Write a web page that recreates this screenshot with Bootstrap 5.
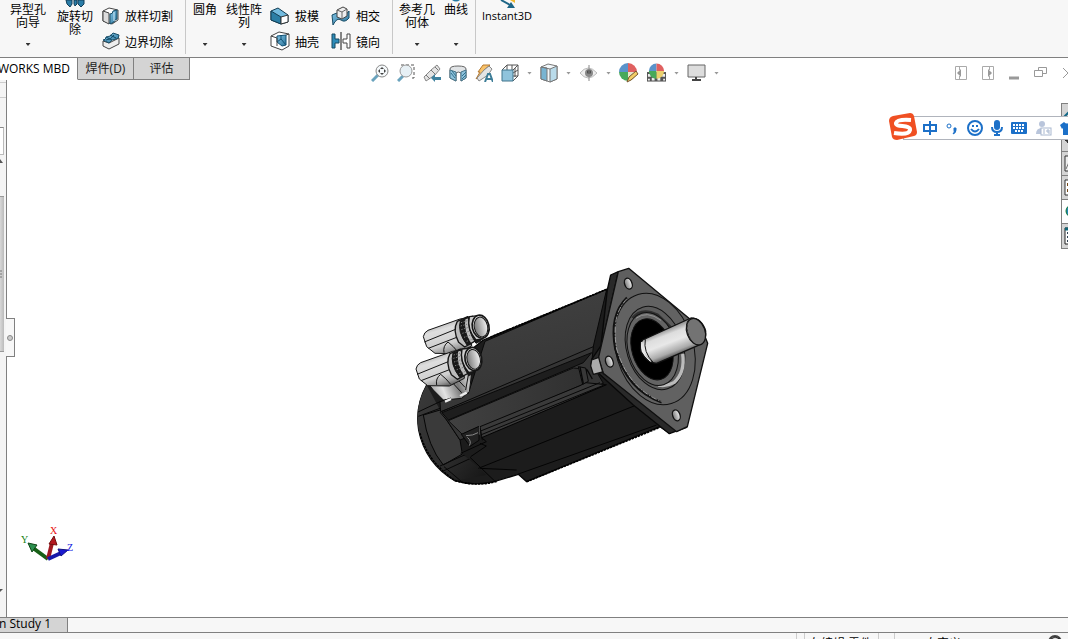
<!DOCTYPE html>
<html lang="zh-CN">
<head>
<meta charset="utf-8">
<meta name="viewport" content="width=device-width, initial-scale=1">
<title>零件建模</title>
<link href="https://cdn.jsdelivr.net/npm/bootstrap@5.3.0/dist/css/bootstrap.min.css" rel="stylesheet">
<script defer src="https://cdn.jsdelivr.net/npm/bootstrap@5.3.0/dist/js/bootstrap.bundle.min.js"></script>
<style>
body{font-family:"Open Sans","Noto Sans CJK SC",sans-serif;font-size:12px;line-height:13px;color:#000;background:#fff}
button{border:0;background:none;padding:0;color:inherit;font:inherit;line-height:inherit}
svg{display:block;flex:none}
.ribbon{height:58px;background:#f7f7f7;border-bottom:1px solid #808080;font-family:"Noto Sans CJK SC",sans-serif}
.ribbon-group{border-right:1px solid #c8c8c8;height:54px}
.tool-big{position:relative;display:flex;flex-direction:column;align-items:center;width:40px;height:54px;text-align:center;white-space:nowrap}
.tool-big .peek{position:absolute;top:0;left:50%;margin-left:-10px}
.tool-big .drop{margin-top:auto;margin-bottom:8px}
.up{padding-top:2px}
.down{padding-top:9px}
.slim{width:38px}
.wide-tool{width:56px}
.latin{font-family:"Open Sans",sans-serif;font-size:11px;width:62px;padding-top:9px}
.drop{width:5px;height:3px;background:#333;clip-path:polygon(0 0,100% 0,50% 100%)}
.tool-list{padding:3px 0 0 6px}
.tool-list button{height:26px;gap:5px;white-space:nowrap}
.cm-tab{height:22px;border:1px solid #808080;border-width:0 1px 1px 0;background:#d4d4d4;width:56px;white-space:nowrap;overflow:hidden;line-height:20px;color:#222}
.cm-tab.active{background:#fff;width:78px;border-bottom-color:#fff;direction:rtl;padding-right:7px;color:#000}
.view-tools{height:30px;margin-left:181px}
.view-tools .drop{background:#999}
.win-tools{height:30px;gap:14px;margin-right:-6px}
.strip{height:22px;z-index:2}
.tree-pane{width:7px;background:#f4f4f4;border-right:1px solid #808080;padding-top:2px}
.rule-line{height:15px;border-top:1px solid #ccc}
.filter-box{height:28px;border:1px solid #bbb;border-top-color:#888;border-left:0;width:4px;background:#fff}
.thumb{height:156px;width:4px;margin-top:33px;border:1px solid #999;border-width:1px 0;background:linear-gradient(90deg,#d8d8d8,#bbb)}
.pane-handle{position:absolute;left:6px;top:238px;width:9px;height:39px;background:#f7f7f7;border:1px solid #808080;border-left:0}
.pane-handle span{width:6px;height:6px;border:1px solid #888;background:#ccc;border-radius:50%}
.motor{position:absolute;left:calc(50% - 134px);top:170px}
.triad{position:absolute;left:20px;bottom:52px;font-family:"Liberation Serif",serif;font-size:10px}
.task-pane{position:absolute;right:0;top:23px;width:7px;border:1px solid #808080;border-right:0;background:#d4d4d4}
.task-pane button{height:24px;border-bottom:1px solid #808080;overflow:hidden}
.ime{position:absolute;right:0;top:36px;width:165px;height:24px;background:#fff;border:1px solid #b0b4bc;border-right:0;z-index:3;padding-left:19px;color:#1c70c8}
.ime .brand{position:absolute;left:-16px;top:-5px}
.sheet-tabs{height:16px;background:#f7f7f7;border-top:1px solid #808080;border-bottom:1px solid #808080}
.sheet-tab{width:68px;background:#d4d4d4;border-right:1px solid #808080;direction:rtl;overflow:hidden;white-space:nowrap;padding-right:16px;line-height:12px;font-size:12px}
.sheet-tab bdi{display:block;width:max-content;margin-top:-2px}
.status{height:6px;background:#f7f7f7;overflow:hidden}
.status div{border-left:1px solid #ccc;height:20px;white-space:nowrap}
.status .coord{position:absolute;right:5px}
.spacer-s{width:8px}.spacer-m{width:16px}.mode{width:74px;padding:4px 4px}.units{width:174px;padding:4px 30px}
</style>
</head>
<body class="d-flex flex-column vh-100 overflow-hidden">
<svg width="0" height="0" class="position-absolute">
 <defs>
  <linearGradient id="blue" x2="1" y2="1"><stop stop-color="#82c4e6"/><stop offset="1" stop-color="#2a7399"/></linearGradient>
  <linearGradient id="pale"><stop stop-color="#fff"/><stop offset="1" stop-color="#c4c8cc"/></linearGradient>
 </defs>
</svg>

<header class="ribbon d-flex flex-shrink-0 overflow-hidden">
 <div class="ribbon-group d-flex">
  <button class="tool-big up wide-tool"><span>异型孔<br>向导</span><span class="drop"></span></button>
  <button class="tool-big down slim"><svg class="peek" width="20" height="8"><path d="M1 0h6v4L5 7 2 4zM9 0h3v4l-2 2-1-2zM13 0h6v4l-3 3-3-3z" fill="#2a7da8" stroke="#123f58"/></svg><span>旋转切<br>除</span></button>
  <div class="tool-list d-flex flex-column ps-2 pe-2 me-1">
   <button class="d-flex align-items-center"><svg width="18" height="18" viewBox="0 0 18 18" stroke="#444"><path d="M1 4l6-3 9 2v10l-6 4-9-3z" fill="#fff"/><path d="M7 6v11l-6-3V4z" fill="#ddd"/><path d="M8 7q3 0 3-3l4-1v9q-3 1-3 3l-4 2z" fill="url(#blue)" stroke="#174c66"/><path d="M12 5v9" stroke="#d6f1ff"/></svg>放样切割</button>
   <button class="d-flex align-items-center"><svg width="18" height="18" viewBox="0 0 18 18" stroke="#444"><path d="M1 9l6 2L17 6v6L7 17l-6-3z" fill="#eee"/><path d="M1 8q3 0 3-3 5 0 7-4l6 2q0 4-3 4-4 0-7 4z" fill="url(#blue)" stroke="#174c66"/><path d="M4 5l6 3M8 3l6 3M4 8q5 0 8-5" stroke="#0e4763" fill="none"/></svg>边界切除</button>
  </div>
 </div>
 <div class="ribbon-group d-flex">
  <button class="tool-big up slim"><span>圆角</span><span class="drop"></span></button>
  <button class="tool-big up"><span>线性阵<br>列</span><span class="drop"></span></button>
  <div class="tool-list d-flex flex-column">
   <button class="d-flex align-items-center"><svg width="20" height="18" viewBox="0 0 20 18" stroke="#133d53"><path d="M1 4l7-3 10 7v7l-7 2-10-4z" fill="#72bade"/><path d="M1 4l10 6v7L1 13z" fill="#2b7ea5"/><path d="M11 10l7-2v7l-7 2z" fill="#fff" stroke="#333"/></svg>拔模</button>
   <button class="d-flex align-items-center"><svg width="20" height="20" viewBox="0 0 20 20" stroke="#444"><path d="M1 5l8-4 10 2v12l-7 4-11-4z" fill="#fff"/><path d="M7 5l9-1v10l-4 1-5-4z" fill="url(#blue)" stroke="#115073"/><path d="M7 11l4-3 5 6M11 4v4" fill="none" stroke="#115073"/><path d="M1 5l6 2v8M16 4l3-1" fill="none"/></svg>抽壳</button>
  </div>
  <div class="tool-list d-flex flex-column ps-2 ms-1 pe-2 me-1">
   <button class="d-flex align-items-center"><svg width="20" height="20" viewBox="0 0 20 20" stroke="#174c66"><path d="M1 9q4-3 9-1t8-3v7q-4 5-8 2t-8 5z" fill="url(#blue)"/><path d="M6 4l6-3 4 2v7l-5 3-5-2z" fill="#eee" stroke="#444"/><path d="M6 4l5 2 5-3M11 6v7" fill="none" stroke="#666"/></svg>相交</button>
   <button class="d-flex align-items-center"><svg width="20" height="18" viewBox="0 0 20 18"><path d="M1 2h3v5h4v4H4v5H1z" fill="#2d8bb8" stroke="#174861"/><path d="M19 2h-3v5h-4v4h4v5h3z" fill="#fff" stroke="#444"/><path d="M10 0v18" stroke="#111"/></svg>镜向</button>
  </div>
 </div>
 <div class="ribbon-group d-flex ps-1">
  <button class="tool-big up"><span>参考几<br>何体</span><span class="drop"></span></button>
  <button class="tool-big up slim"><svg class="peek" width="20" height="2"><path d="M6 0h8q-4 3-8 0" fill="#2679a1"/></svg><span>曲线</span><span class="drop"></span></button>
 </div>
 <button class="tool-big latin"><svg class="peek" width="20" height="9"><path d="M13 0h5v3z" fill="#f0b82d"/><path d="M4 0l9 5" stroke="#1d6586" stroke-width="2"/><path d="M18 8h-8l4-6z" fill="#1d6586"/></svg><span>Instant3D</span></button>
</header>

<div class="strip d-flex flex-shrink-0 position-relative">
 <button class="cm-tab active">SOLIDWORKS MBD</button>
 <button class="cm-tab">焊件(D)</button>
 <button class="cm-tab">评估</button>
 <div class="view-tools d-flex align-items-center gap-2">
  <button aria-label="整屏显示"><svg width="18" height="18" viewBox="0 0 18 18"><path d="M1 17l6-6" stroke="#6aa3bd" stroke-width="3"/><circle cx="11" cy="7" r="6" fill="#f5f9fb" stroke="#888"/><path d="M11 3l2 2H9zM11 11l2-2H9zM7 7l2-2v4zM15 7l-2-2v4z" fill="#444"/></svg></button>
  <button aria-label="局部放大"><svg width="18" height="18" viewBox="0 0 18 18"><path d="M4 1h13v13h-3" fill="none" stroke="#555" stroke-dasharray="3 2"/><path d="M1 17l5-5" stroke="#6aa3bd" stroke-width="3"/><circle cx="9" cy="7" r="6" fill="#e7f0f5" stroke="#999"/></svg></button>
  <button aria-label="上一视图"><svg width="18" height="18" viewBox="0 0 18 18"><path d="M1 13l7-7 6-5 3 4-5 6-9 6z" fill="#e4e4e4" stroke="#888"/><path d="M3 11l4 4M8 6l4 4M12 3l3 3" stroke="#777"/><path d="M8 14l4-4v3h6v3h-6v2z" fill="#3f829f"/></svg></button>
  <button aria-label="剖面视图"><svg width="18" height="18" viewBox="0 0 18 18"><path d="M1 5q0-3 8-3t8 3v9l-5 3V9q-3-2-5 0v8l-6-3z" fill="#e1e4e6" stroke="#666"/><path d="M1 6l6 2v9l-6-3zM12 8l5-2v8l-5 3z" fill="#8dc2dc" stroke="#47758a"/><path d="M2 9l4 5M3 7l4 5M13 12l4-4M13 15l4-4" stroke="#32718d"/></svg></button>
  <button aria-label="动态注解"><svg width="18" height="18" viewBox="0 0 18 18"><path d="M3 8L8 1h7L9 6l3 0L1 15l4-7z" fill="#f8c269" stroke="#b57930"/><path d="M2 14l7-8 5-4 3 3-4 6-9 6z" fill="#e4e4e4" stroke="#888"/><path d="M10 18l3-8h2l3 8M11 15h6" fill="none" stroke="#3d7d98" stroke-width="2"/></svg></button>
  <button aria-label="视图定向"><svg width="18" height="18" viewBox="0 0 18 18"><path d="M1 6l5-5h11v11l-5 5M6 1v5M12 6l5-5M12 12h5M11 1v5M12 9l5-3M14 4v9" fill="none" stroke="#555"/><path d="M1 6h11v11H1z" fill="#8fc3dc" stroke="#40748c"/></svg></button>
  <span class="drop"></span>
  <button aria-label="显示样式"><svg width="18" height="20" viewBox="0 0 18 20" stroke="#777"><path d="M1 4l7-3 9 2v13l-7 3-9-3z" fill="#f2f8fb"/><path d="M1 4l6 1v13l-6-2z" fill="#78b4d2"/><path d="M10 6l7-3v13l-7 3z" fill="#b9dbea"/><path d="M1 4l9 2" fill="none"/></svg></button>
  <span class="drop"></span>
  <button aria-label="隐藏项目"><svg width="19" height="16" viewBox="0 0 19 16"><path d="M1 8q8-10 17 0-9 10-17 0z" fill="#eee" stroke="#bbb"/><circle cx="10" cy="8" r="4" fill="#888"/><circle cx="10" cy="7" r="2" fill="#444"/><path d="M10 0v16" stroke="#888"/></svg></button>
  <span class="drop"></span>
  <button aria-label="编辑外观"><svg width="20" height="20" viewBox="0 0 20 20"><path d="M9 9V0a9 9 0 0 0-9 9z" fill="#5a93cb"/><path d="M9 9h9a9 9 0 0 0-9-9z" fill="#e06060"/><path d="M9 9H0a9 9 0 0 0 9 9z" fill="#48a95a"/><path d="M9 9v9q7 0 9-9z" fill="#e8e6ca"/><path d="M8 19l2-5 7-6 2 3-7 6z" fill="#f3ce67" stroke="#765630"/></svg></button>
  <button aria-label="应用布景"><svg width="19" height="20" viewBox="0 0 20 20"><path d="M0 9h20v10H0z" fill="#555"/><path d="M1 11h3v3H1zM5 15h3v3H5zM11 15h3v3h-3zM16 11h3v3h-3zM1 16h2v2H1zM17 16h2v2h-2z" fill="#eee"/><path d="M10 8V0a8 8 0 0 0-8 8z" fill="#5a93cb"/><path d="M10 8h8a8 8 0 0 0-8-8z" fill="#e06060"/><path d="M10 8H2a8 8 0 0 0 8 8z" fill="#48a95a"/><path d="M10 8v8a8 8 0 0 0 8-8z" fill="#ecd16d"/></svg></button>
  <span class="drop"></span>
  <button aria-label="视图设定"><svg width="19" height="18" viewBox="0 0 19 18"><path d="M1 1h17v12H1z" fill="#ddd" stroke="#666"/><path d="M9 13v3M5 16h9" stroke="#444" stroke-width="2"/></svg></button>
  <span class="drop"></span>
 </div>
 <div class="win-tools d-flex align-items-center ms-auto">
  <svg width="13" height="14"><path d="M.5.5h11v13H.5zM4.500 1v3M4.500 10v3" fill="none" stroke="#aaa"/><path d="M2 7l4-4v8z" fill="#999"/></svg>
  <svg width="13" height="14"><path d="M.5.5h11v13H.5zM7.500 1v3M7.500 10v3" fill="none" stroke="#aaa"/><path d="M10 7L6 3v8z" fill="#999"/></svg>
  <svg width="11" height="14"><path d="M0 12h10" stroke="#999" stroke-width="3"/></svg>
  <svg width="14" height="14"><path d="M4.500 5V1.500h8v6H9M.5 4.500h8v6h-8z" fill="none" stroke="#999"/></svg>
  <svg width="12" height="12"><path d="M1 1l10 10M11 1L1 11" stroke="#999"/></svg>
 </div>
</div>

<main class="d-flex flex-fill position-relative">
 <aside class="tree-pane d-flex flex-column">
  <div class="rule-line"></div><div class="rule-line"></div><div class="rule-line border-0"></div>
  <div class="filter-box"></div>
  <div class="mt-1"><svg width="5" height="4"><path d="M0 4V0l3 4z" fill="#555"/></svg></div>
  <div class="thumb d-flex align-items-center"><svg width="2" height="8"><path d="M0 1h2M0 4h2M0 7h2" stroke="#777"/></svg></div>
  <div class="mt-auto mb-4"><svg width="4" height="4"><path d="M0 0h3L0 3z" fill="#555"/></svg></div>
 </aside>
 <button class="pane-handle d-flex align-items-center justify-content-center" aria-label="展开"><span></span></button>

 <svg class="motor" width="320" height="250" viewBox="0 0 960 750" stroke-linejoin="round">
  <defs>
   <linearGradient id="top" x1=".3" y1="0" x2=".6" y2="1"><stop stop-color="#414141"/><stop offset="1" stop-color="#343434"/></linearGradient>
   <linearGradient id="shaft" x1="785" y1="235" x2="820" y2="325" gradientUnits="userSpaceOnUse"><stop stop-color="#777"/><stop offset=".25" stop-color="#ddd"/><stop offset=".5" stop-color="#e8e8e8"/><stop offset=".8" stop-color="#aaa"/><stop offset="1" stop-color="#383838"/></linearGradient>
   <linearGradient id="plug" x1="125" y1="218" x2="155" y2="316" gradientUnits="userSpaceOnUse"><stop stop-color="#b5b5b5"/><stop offset=".2" stop-color="#dedede"/><stop offset=".65" stop-color="#cfcfcf"/><stop offset=".85" stop-color="#999"/><stop offset="1" stop-color="#555"/></linearGradient>
   <linearGradient id="neck" x1="95" y1="420" x2="215" y2="370" gradientUnits="userSpaceOnUse"><stop stop-color="#aaa"/><stop offset=".25" stop-color="#e4e4e4"/><stop offset=".6" stop-color="#777"/><stop offset=".85" stop-color="#c8c8c8"/><stop offset="1" stop-color="#888"/></linearGradient>
   <linearGradient id="bore"><stop stop-color="#777"/><stop offset="1" stop-color="#f2f2f2"/></linearGradient>
   <linearGradient id="cap" x2="1" y2="1"><stop stop-color="#3a3a3a"/><stop offset=".6" stop-color="#2c2c2c"/><stop offset="1" stop-color="#151515"/></linearGradient>
   <linearGradient id="slot"><stop stop-color="#414141"/><stop offset="1" stop-color="#303030"/></linearGradient>
  </defs>
  <path d="M620 118L250 270 80 405C55 450 48 490 56 540 70 610 110 660 165 692Q220 710 285 694L355 673 380 695 780 530 810 550 720 440z" fill="#1c1c1c" stroke="#050505" stroke-width="4"/>
  <path d="M80 405C55 450 48 490 56 540 70 610 110 660 165 692L260 675 185 610 120 480z" fill="url(#cap)"/>
  <path d="M620 118L255 274 205 430 120 455 122 485 575 310z" fill="url(#top)" stroke="#080808" stroke-width="3"/>
  <path d="M70 495Q84 590 130 645L187 612 180 570 140 510 120 480z" fill="#3a3a3a" stroke="#050505" stroke-width="3"/>
  <path d="M54 486L120 455M55 499L120 475M120 648L200 612M132 662L212 625M132 650L185 695" stroke="#070707" stroke-width="3"/>
  <path d="M120 487L580 290 575 340 610 400 180 570 140 510z" fill="#353535" stroke="#080808" stroke-width="3"/>
  <path d="M126 488L575 308 550 338 145 510z" fill="#1e1e1e" stroke="#090909" stroke-width="3"/>
  <path d="M145 512L520 354 560 358 557 400 190 556z" fill="url(#slot)" stroke="#0c0c0c" stroke-width="3"/>
  <path d="M240 530L540 407 557 398 618 404 247 570z" fill="#3a3a3a" stroke="#080808" stroke-width="3"/>
  <path d="M242 543L600 398M244 554L610 406" stroke="#080808" stroke-width="3"/>
  <path d="M535 350l22 4 8 40-17 9z" fill="#383838" stroke="#080808" stroke-width="3"/>
  <path d="M540 351l10 50M561 359l16 28M573 340l20 28" fill="none" stroke="#080808" stroke-width="4"/>
  <path d="M184 553l53-24v42l-27 18z" fill="#222" stroke="#050505" stroke-width="3"/>
  <path d="M198 557Q220 557 234 548M202 562Q216 573 208 587" stroke="#888" fill="none" stroke-width="3"/>
  <path d="M238 529v25" stroke="#777" stroke-width="2"/>
  <path d="M182 605l77-32-14-10L622 402 722 460 240 653z" fill="#1c1c1c"/>
  <path d="M182 610l77-35-14-12L620 404M212 620L259 588 240 580M235 655L722 460M355 672L770 525M210 622L285 694M240 655L350 660" stroke="#040404" fill="none" stroke-width="3"/>
  <path d="M620 118L270 262" stroke="#000" stroke-width="5" stroke-dasharray="7 3"/>
  <path d="M380 695L780 532M60 550Q82 635 165 692 230 711 290 694" stroke="#000" stroke-width="5" fill="none" stroke-dasharray="7 3"/>

  <path d="M80 395L100 420 130 450 185 445 208 425 215 370 145 355z" fill="url(#neck)" stroke="#111" stroke-width="3"/>
  <path d="M150 390l35 38M165 380l30 32M205 375l-8 45M135 450l18-6M180 440l18-10" stroke="#111" stroke-width="3" fill="none"/>
  <path d="M135 455l18-8M180 438l20-10" stroke="#eee" stroke-width="7"/>
  <g id="connector" stroke="#151515">
   <path d="M70 260Q72 247 84 241L180 207 210 202 215 288 170 311 105 310 80 290z" fill="url(#plug)" stroke-width="3"/>
   <path d="M73 276L174 235M85 295L178 259M132 308q-4-20 12-32M144 276q16 12 30 30" stroke-width="3" fill="none"/>
   <path d="M172 214q-15 26 4 63l18 14 39-22-30-69z" fill="#bbb" stroke-width="4"/>
   <path d="M181 212q-10 33 20 73l12-3q-25-40-18-78l13-4q-9 37 20 80l15-7-25-75z" fill="#181818" stroke-width="3"/>
   <path d="M183 218l23-7M182 228l25-7M184 239l25-8M187 250l26-8M192 262l26-9M200 274l26-10" stroke="#777" stroke-width="3" stroke-dasharray="4 4"/>
   <path d="M208 200q-8 38 20 70l20-3-13-70z" fill="#ccc" stroke-width="4"/>
   <ellipse cx="242" cy="230" rx="25" ry="35" transform="rotate(-12 242 230)" fill="#e2e2e2" stroke-width="5"/>
   <ellipse cx="243" cy="231" rx="20" ry="30" transform="rotate(-12 243 231)" fill="url(#bore)" stroke-width="3"/>
  </g>
  <g transform="translate(-22 97)"><use href="#connector"/></g>

  <path d="M632 75L655 65 596 325 610 370 860 532 808 551 700 465 574 350 575 328 603 287 622 119z" fill="#292929" stroke="#080808" stroke-width="4"/>
  <path d="M655 65L686 55 865 203 905 235 923 280 862 530 830 545 610 370 595 325z" fill="#5f5f5f" stroke="#101010" stroke-width="4"/>
  <path d="M575 330l21-8 12 44-28 7-8-25z" fill="#aaa" stroke="#111" stroke-width="4"/>
  <g fill="none" stroke="#111" stroke-width="3">
   <ellipse cx="764" cy="297" rx="116" ry="171" transform="rotate(-17 764 297)" fill="#626262"/>
   <path d="M681 143Q627 195 646 297 680 420 785 457" stroke-width="7"/><path d="M681 146Q632 195 650 297 684 415 785 455" stroke="#ccc" stroke-width="2" stroke-dasharray="18 5 4 4"/>
   <ellipse cx="765" cy="294" rx="85" ry="128" transform="rotate(-17 765 294)" fill="#5c5c5c"/>
   <path d="M698 205Q724 172 772 195L835 255" stroke="#303030" stroke-width="10"/>
   <path d="M848 312Q856 366 823 397 800 410 775 405" stroke="#bbb" stroke-width="10"/>
   <ellipse cx="758" cy="297" rx="73" ry="112" transform="rotate(-17 758 297)" fill="#646464"/>
   <ellipse cx="756" cy="298" rx="60" ry="94" transform="rotate(-17 756 298)" fill="#000"/>
   <path d="M708 205Q740 180 783 211" stroke="#aaa" stroke-width="2"/>
  </g>
  <path d="M728 270L873 204Q905 205 917 243 920 275 895 286L770 340Q742 340 723 305 718 280 728 270z" fill="url(#shaft)" stroke="#111" stroke-width="4"/>
  <path d="M736 268Q729 306 760 338" fill="none" stroke="#111" stroke-width="3"/><path d="M725 276Q721 310 752 335" stroke="#eee" fill="none" stroke-width="3"/>
  <ellipse cx="888" cy="245" rx="27" ry="41" transform="rotate(-20 888 245)" fill="#737373" stroke="#111" stroke-width="4"/>
  <path d="M864 213Q853 240 874 272" fill="none" stroke="#222" stroke-width="4" stroke-dasharray="8 4"/>
  <g fill="url(#bore)" stroke="#111" stroke-width="4"><ellipse cx="685" cy="101" rx="11" ry="17" transform="rotate(-20 685 101)"/><ellipse cx="628" cy="335" rx="11" ry="17" transform="rotate(-20 628 335)"/><ellipse cx="829" cy="496" rx="11" ry="17" transform="rotate(-20 829 496)"/></g>
 </svg>

 <svg class="triad" width="60" height="40" viewBox="0 0 60 40">
  <path d="M28 34L13 23" stroke="#176017" stroke-width="4"/><path d="M8 18l9 2-5 7z" fill="#2c9050" stroke="#0d4515"/>
  <path d="M28 34l4-16" stroke="#a01820" stroke-width="4"/><path d="M34 11l3 9-8-1z" fill="#b41820" stroke="#701010"/>
  <path d="M28 34l13-6" stroke="#1818a8" stroke-width="4"/><path d="M48 25l-7 6-3-7z" fill="#1a1ad0" stroke="#101080"/>
  <text x="1" y="18" fill="#108010">Y</text><text x="30" y="9" fill="#e81010">X</text><text x="47" y="26" fill="#1010e0">Z</text>
 </svg>

 <nav class="task-pane d-flex flex-column">
  <button aria-label="主页"><svg width="7" height="24"><path d="M2 13l5-5M3 12v11" stroke="#126787" stroke-width="2"/></svg></button>
  <button aria-label="设计库"><svg width="7" height="24"><path d="M3 12h3v3" stroke="#333" stroke-width="2"/></svg></button>
  <button aria-label="文件探索器"><svg width="7" height="24"><path d="M7 4H3v15h4" fill="#eee" stroke="#333"/><path d="M4 17l3-7" stroke="#777"/></svg></button>
  <button aria-label="视图调色板"><svg width="7" height="24"><path d="M7 4H3v15h4" fill="#fff" stroke="#333"/><path d="M6 7v3M6 13v3" stroke="#754a19" stroke-width="2"/></svg></button>
  <button class="bg-white" aria-label="外观"><svg width="7" height="24"><circle cx="10" cy="11" r="6" fill="#2585b5" stroke="#173"/></svg></button>
  <button class="border-0" aria-label="自定义属性"><svg width="7" height="24"><path d="M7 4H3v16h4" fill="#fff" stroke="#222"/><path d="M3 5h4" stroke="#167" stroke-width="3"/><path d="M5 9h2M5 13h2M5 17h2" stroke="#345" stroke-width="2"/></svg></button>
 </nav>
 <div class="ime d-flex align-items-center">
  <svg class="brand" width="30" height="29" viewBox="0 0 30 29"><path d="M5 4l17-3q3 0 4 3l3 16q0 3-3 4L9 28q-4 0-5-3L1 9q0-4 4-5z" fill="#f05023"/><path d="M23 8Q9 7 8 11c-1 5 15 1 14 7-1 5-10 4-16 3" fill="none" stroke="#fff" stroke-width="4"/></svg>
  <div class="d-flex align-items-center gap-2">
   <svg width="14" height="14"><path d="M1 4h12v6H1zM7 0v14" fill="none" stroke="#1c70c8" stroke-width="2"/></svg>
   <svg width="14" height="14"><circle cx="4" cy="5" r="2" fill="none" stroke="#1c70c8"/><path d="M9 7v2q1 2-1 4 3-1 3-4V7z" fill="#1c70c8" stroke="#1c70c8"/></svg>
   <svg width="16" height="16" fill="none" stroke="#1c70c8" stroke-width="2"><circle cx="8" cy="8" r="7"/><path d="M4 9q4 5 8 0M6 5v2M10 5v2"/></svg>
   <svg width="12" height="16" fill="none" stroke="#1c70c8" stroke-width="2"><path d="M1 7q0 5 5 5t5-5M6 12v4M3 15h6"/><path d="M6 3v4" stroke-width="6" stroke-linecap="round"/></svg>
   <svg width="16" height="12"><rect width="16" height="12" rx="1" fill="#1c70c8"/><path d="M2 3h12M2 6h12M4 9h8" stroke="#fff" stroke-width="2" stroke-dasharray="2 1"/></svg>
   <svg width="17" height="16"><circle cx="7" cy="4" r="3" fill="#b9c5db"/><path d="M1 14q0-6 6-6t6 6z" fill="#b9c5db"/><rect x="6" y="8" width="10" height="7" fill="#fff" stroke="#a9b8d0"/><path d="M9 9v5M14 14v-4h-2v2h2" fill="none" stroke="#a9b8d0"/></svg>
   <svg width="14" height="14"><path d="M4 1q3 3 6 0l4 3-2 4-1-1v7H3V7L2 8 0 4z" fill="#1c70c8"/></svg>
  </div>
 </div>
</main>

<div class="sheet-tabs d-flex flex-shrink-0"><button class="sheet-tab"><bdi>Motion Study 1</bdi></button></div>
<footer class="status d-flex flex-shrink-0 justify-content-end"><div class="spacer-s"></div><div class="mode">在编辑 零件</div><div class="spacer-m"></div><div class="units">自定义</div><svg class="coord" width="15" height="16"><circle cx="7" cy="9" r="6" fill="#ddd" stroke="#444" stroke-width="2"/><path d="M3 6l4-2 5 2" stroke="#222" fill="none"/></svg></footer>
</body>
</html>
